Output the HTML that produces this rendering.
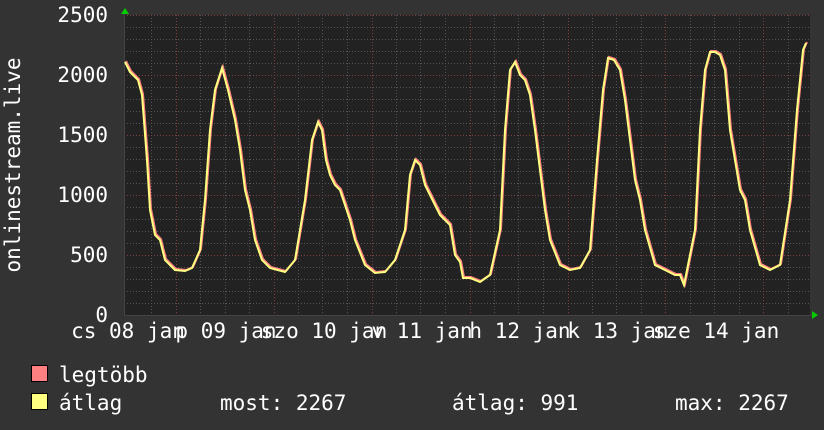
<!DOCTYPE html>
<html><head><meta charset="utf-8"><style>
html,body{margin:0;padding:0;background:#333333;}
svg{display:block;}
text{font-family:"DejaVu Sans Mono","Liberation Mono",monospace;fill:#ffffff;font-size:21px;}
</style></head><body>
<svg width="824" height="430" viewBox="0 0 824 430" xmlns="http://www.w3.org/2000/svg">
<rect width="824" height="430" fill="#333333"/>
<rect x="124" y="15" width="686" height="300" fill="#222222"/>
<g stroke="#555555" stroke-width="1" stroke-dasharray="1,2">
<line x1="124" y1="303.5" x2="810" y2="303.5"/><line x1="124" y1="291.5" x2="810" y2="291.5"/><line x1="124" y1="279.5" x2="810" y2="279.5"/><line x1="124" y1="267.5" x2="810" y2="267.5"/>
<line x1="124" y1="243.5" x2="810" y2="243.5"/><line x1="124" y1="231.5" x2="810" y2="231.5"/><line x1="124" y1="219.5" x2="810" y2="219.5"/><line x1="124" y1="207.5" x2="810" y2="207.5"/>
<line x1="124" y1="183.5" x2="810" y2="183.5"/><line x1="124" y1="171.5" x2="810" y2="171.5"/><line x1="124" y1="159.5" x2="810" y2="159.5"/><line x1="124" y1="147.5" x2="810" y2="147.5"/>
<line x1="124" y1="123.5" x2="810" y2="123.5"/><line x1="124" y1="111.5" x2="810" y2="111.5"/><line x1="124" y1="99.5" x2="810" y2="99.5"/><line x1="124" y1="87.5" x2="810" y2="87.5"/>
<line x1="124" y1="63.5" x2="810" y2="63.5"/><line x1="124" y1="51.5" x2="810" y2="51.5"/><line x1="124" y1="39.5" x2="810" y2="39.5"/><line x1="124" y1="27.5" x2="810" y2="27.5"/>
<line x1="151.5" y1="15" x2="151.5" y2="315"/><line x1="200.5" y1="15" x2="200.5" y2="315"/><line x1="225.5" y1="15" x2="225.5" y2="315"/><line x1="249.5" y1="15" x2="249.5" y2="315"/>
<line x1="298.5" y1="15" x2="298.5" y2="315"/><line x1="322.5" y1="15" x2="322.5" y2="315"/><line x1="347.5" y1="15" x2="347.5" y2="315"/>
<line x1="396.5" y1="15" x2="396.5" y2="315"/><line x1="420.5" y1="15" x2="420.5" y2="315"/><line x1="445.5" y1="15" x2="445.5" y2="315"/>
<line x1="494.5" y1="15" x2="494.5" y2="315"/><line x1="518.5" y1="15" x2="518.5" y2="315"/><line x1="543.5" y1="15" x2="543.5" y2="315"/>
<line x1="592.5" y1="15" x2="592.5" y2="315"/><line x1="616.5" y1="15" x2="616.5" y2="315"/><line x1="641.5" y1="15" x2="641.5" y2="315"/>
<line x1="690.5" y1="15" x2="690.5" y2="315"/><line x1="714.5" y1="15" x2="714.5" y2="315"/><line x1="739.5" y1="15" x2="739.5" y2="315"/>
<line x1="788.5" y1="15" x2="788.5" y2="315"/>
</g>
<g stroke="#804040" stroke-width="1" stroke-dasharray="1,2">
<line x1="124" y1="255.5" x2="810" y2="255.5"/><line x1="124" y1="195.5" x2="810" y2="195.5"/><line x1="124" y1="135.5" x2="810" y2="135.5"/><line x1="124" y1="75.5" x2="810" y2="75.5"/><line x1="124" y1="15.5" x2="810" y2="15.5"/>
<line x1="176.5" y1="15" x2="176.5" y2="315"/><line x1="274.5" y1="15" x2="274.5" y2="315"/><line x1="372.5" y1="15" x2="372.5" y2="315"/><line x1="470.5" y1="15" x2="470.5" y2="315"/><line x1="568.5" y1="15" x2="568.5" y2="315"/><line x1="665.5" y1="15" x2="665.5" y2="315"/><line x1="763.5" y1="15" x2="763.5" y2="315"/>
</g>
<line x1="124" y1="315.5" x2="812" y2="315.5" stroke="#444" stroke-width="1"/>
<line x1="124.5" y1="12" x2="124.5" y2="315" stroke="#444" stroke-width="1"/>
<polygon points="121,14 125,8 129,14" fill="#00cc00"/>
<polygon points="812,311 818,315 812,319" fill="#00cc00"/>
<polyline fill="none" stroke="#ff8080" stroke-width="2" transform="translate(1,-1)" points="125,62 130,72 138,80 142,95 147,160 150,210 155,235 160,240 165,260 170,265 175,270 185,271 192,268 200,250 205,200 210,130 215,90 222,68 228,90 235,120 240,150 245,190 250,210 255,240 262,260 270,268 285,272 295,260 305,200 312,140 318,122 322,130 326,160 330,175 335,185 340,190 345,205 350,220 355,240 365,265 375,273 385,272 395,260 405,230 410,175 415,160 420,165 425,185 430,195 435,205 440,215 445,220 450,225 455,255 460,262 463,278 470,278 480,282 490,275 500,230 505,130 510,70 515,62 520,75 525,80 530,95 535,130 540,170 545,210 550,240 560,265 570,270 580,268 590,250 597,160 603,90 608,58 614,60 620,70 625,100 630,140 635,180 640,200 645,230 655,265 665,270 675,275 680,275 684,285 688,265 695,230 700,130 705,70 710,52 715,52 720,55 725,70 730,130 735,160 740,190 745,200 750,230 760,265 770,270 780,265 790,200 797,110 803,50 806,43"/>
<polyline fill="none" stroke="#ffff80" stroke-width="2" points="125,62 130,72 138,80 142,95 147,160 150,210 155,235 160,240 165,260 170,265 175,270 185,271 192,268 200,250 205,200 210,130 215,90 222,68 228,90 235,120 240,150 245,190 250,210 255,240 262,260 270,268 285,272 295,260 305,200 312,140 318,122 322,130 326,160 330,175 335,185 340,190 345,205 350,220 355,240 365,265 375,273 385,272 395,260 405,230 410,175 415,160 420,165 425,185 430,195 435,205 440,215 445,220 450,225 455,255 460,262 463,278 470,278 480,282 490,275 500,230 505,130 510,70 515,62 520,75 525,80 530,95 535,130 540,170 545,210 550,240 560,265 570,270 580,268 590,250 597,160 603,90 608,58 614,60 620,70 625,100 630,140 635,180 640,200 645,230 655,265 665,270 675,275 680,275 684,285 688,265 695,230 700,130 705,70 710,52 715,52 720,55 725,70 730,130 735,160 740,190 745,200 750,230 760,265 770,270 780,265 790,200 797,110 803,50 806,43"/>
<g text-anchor="end">
<text x="108" y="22">2500</text>
<text x="108" y="82">2000</text>
<text x="108" y="142">1500</text>
<text x="108" y="202">1000</text>
<text x="108" y="262">500</text>
<text x="108" y="322">0</text>
</g>
<text transform="translate(20,165) rotate(-90)" text-anchor="middle">onlinestream.live</text>
<g text-anchor="middle">
<text x="128" y="338">cs 08 jan</text>
<text x="226" y="338">p 09 jan</text>
<text x="324" y="338">szo 10 jan</text>
<text x="422" y="338">v 11 jan</text>
<text x="520" y="338">h 12 jan</text>
<text x="618" y="338">k 13 jan</text>
<text x="716" y="338">sze 14 jan</text>
</g>
<rect x="31.5" y="365.5" width="16" height="16" fill="#ff8080" stroke="#000" stroke-width="1"/>
<rect x="31.5" y="393.5" width="16" height="16" fill="#ffff80" stroke="#000" stroke-width="1"/>
<text x="59" y="382">legtöbb</text>
<text x="59" y="410">átlag</text>
<text x="220" y="410">most: 2267</text>
<text x="452" y="410">átlag: 991</text>
<text x="675" y="410">max: 2267</text>
</svg>
</body></html>
